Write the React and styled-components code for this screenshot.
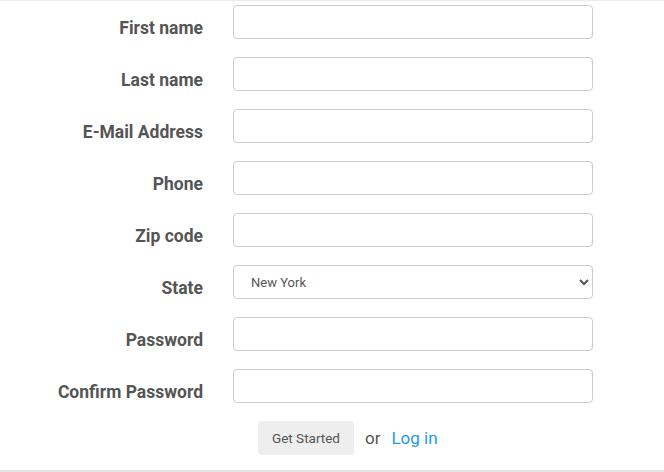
import React from 'react';
import styled, { createGlobalStyle } from 'styled-components';

const GlobalStyle = createGlobalStyle`
  html, body {
    margin: 0;
    padding: 0;
    background: #ffffff;
  }
  body {
    font-family: Roboto, "Noto Sans", sans-serif;
    color: #555555;
  }
`;

const Page = styled.div`
  width: 664px;
  height: 472px;
  box-sizing: border-box;
  border-top: 1px solid #ececec;
  border-bottom: 2px solid #e4e4e4;
  padding-top: 4px;
`;

const Form = styled.form`
  display: grid;
  grid-template-columns: 203px 360px;
  column-gap: 30px;
  row-gap: 18px;
  margin: 0;
`;

const Label = styled.label`
  text-align: right;
  font-size: 17.5px;
  font-weight: 700;
  color: #555555;
  line-height: 20px;
  padding-top: 13px;
  white-space: nowrap;
`;

const Field = styled.input`
  box-sizing: border-box;
  width: 360px;
  height: 34px;
  border: 1px solid #cccccc;
  border-radius: 4px;
  padding: 0 12px;
  font-family: Roboto, sans-serif;
  font-size: 13px;
  color: #555555;
  background: #ffffff;
  outline: none;
`;

const Select = styled.select`
  box-sizing: border-box;
  width: 360px;
  height: 34px;
  border: 1px solid #cccccc;
  border-radius: 4px;
  padding: 1px 8px 0 13px;
  font-family: Roboto, sans-serif;
  font-size: 13px;
  color: #555555;
  background: #ffffff;
  outline: none;
`;

const Actions = styled.div`
  grid-column: 2;
  display: flex;
  align-items: center;
  gap: 11px;
  padding-left: 25px;
`;

const Button = styled.button`
  height: 34px;
  width: 96px;
  border: none;
  border-radius: 4px;
  background: #eeeeee;
  color: #555555;
  font-family: Roboto, sans-serif;
  font-size: 13.5px;
  cursor: pointer;
`;

const Or = styled.span`
  font-size: 17px;
  color: #555555;
`;

const LoginLink = styled.a`
  font-size: 17px;
  color: #1e9ae6;
  text-decoration: none;
`;

const fields = [
  { label: 'First name', type: 'text' },
  { label: 'Last name', type: 'text' },
  { label: 'E-Mail Address', type: 'email' },
  { label: 'Phone', type: 'tel' },
  { label: 'Zip code', type: 'text' },
  { label: 'State', select: true },
  { label: 'Password', type: 'password' },
  { label: 'Confirm Password', type: 'password' },
];

export default function App() {
  return (
    <>
      <GlobalStyle />
      <Page>
        <Form onSubmit={(e) => e.preventDefault()}>
          {fields.map((f) => (
            <React.Fragment key={f.label}>
              <Label>{f.label}</Label>
              {f.select ? (
                <Select defaultValue="New York">
                  <option>New York</option>
                  <option>California</option>
                  <option>Texas</option>
                </Select>
              ) : (
                <Field type={f.type} />
              )}
            </React.Fragment>
          ))}
          <Actions>
            <Button type="submit">Get Started</Button>
            <Or>or</Or>
            <LoginLink href="#">Log in</LoginLink>
          </Actions>
        </Form>
      </Page>
    </>
  );
}
